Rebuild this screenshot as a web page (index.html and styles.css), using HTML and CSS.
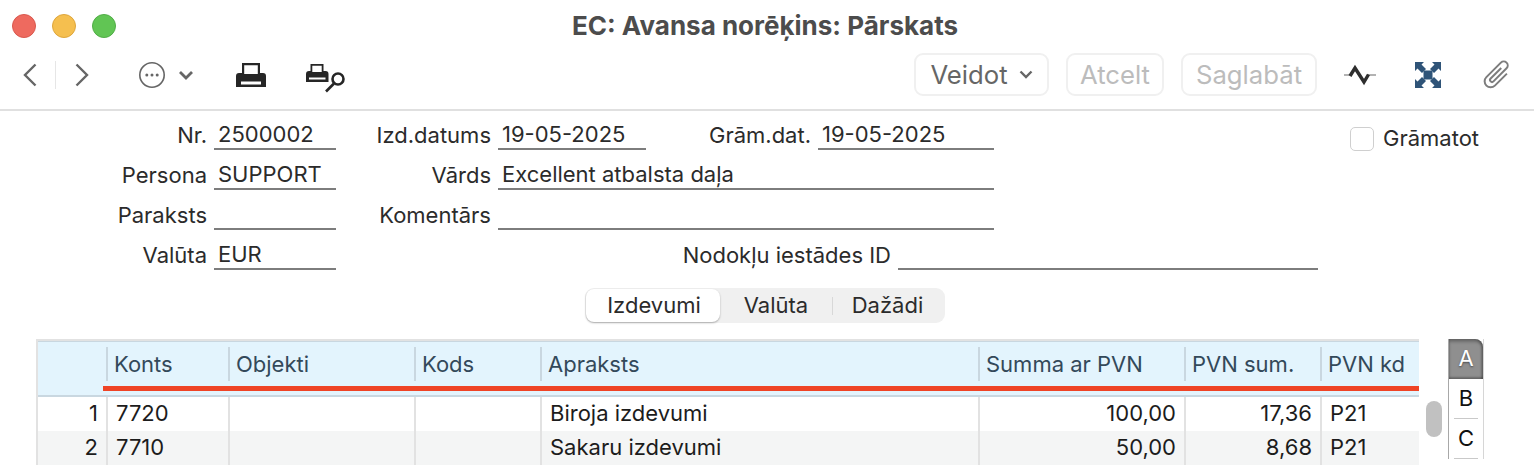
FILE: index.html
```html
<!DOCTYPE html>
<html lang="lv">
<head>
    <meta charset="UTF-8">
    <title>EC: Avansa norēķins: Pārskats</title>
    <link rel="stylesheet" href="styles.css">
</head>
<body>
    <div class="window">
        <div class="titlebar">
            <div class="lights">
                <span class="light light-red"></span>
                <span class="light light-yellow"></span>
                <span class="light light-green"></span>
            </div>
            <h1>EC: Avansa norēķins: Pārskats</h1>
        </div>

        <div class="toolbar">
            <svg class="icon icon-back" width="14" height="24" viewBox="0 0 14 24"><path d="M12.500 1.500 2 12l10.500 10.500"/></svg>
            <span class="nav-sep"></span>
            <svg class="icon icon-forward" width="14" height="24" viewBox="0 0 14 24"><path d="M1.500 1.500 12 12 1.500 22.500"/></svg>
            <svg class="icon icon-more" width="28" height="28" viewBox="0 0 28 28">
                <circle cx="14" cy="14" r="12.200"/>
                <circle class="dot" cx="8.800" cy="14" r="1.500"/>
                <circle class="dot" cx="14" cy="14" r="1.500"/>
                <circle class="dot" cx="19.200" cy="14" r="1.500"/>
            </svg>
            <svg class="icon icon-caret" width="16" height="10" viewBox="0 0 16 10"><path d="M2 2l6 6 6-6"/></svg>
            <svg class="icon-solid icon-print" width="32" height="26" viewBox="0 0 32 26">
                <path d="M7 1h18v10h3a3 3 0 0 1 3 3v11H1V14a3 3 0 0 1 3-3h3zm2.200 2.200V12h13.600V3.200zM6 19.500V22.500h20V19.500z" fill-rule="evenodd"/>
            </svg>
            <svg class="icon-solid icon-preview" width="42" height="30" viewBox="0 0 42 30">
                <path d="M5.500 1h13v7h2a3 3 0 0 1 3 3v8H1v-8a3 3 0 0 1 3-3h1.500zm1.800 1.800V9h9.400V2.800zM4 14.500V16.500h16.500v-2z" fill-rule="evenodd"/>
                <circle class="lens" cx="33" cy="16" r="5.500"/>
                <path class="lens" d="M29 20.500 21 28.500"/>
            </svg>
            <div class="spacer"></div>
            <button class="btn btn-veidot">Veidot
                <svg class="icon" width="14" height="9" viewBox="0 0 14 9"><path d="M1.500 1.500 7 7l5.500-5.500"/></svg>
            </button>
            <button class="btn btn-off btn-atcelt">Atcelt</button>
            <button class="btn btn-off btn-saglabat">Saglabāt</button>
            <svg class="icon-wave" width="32" height="26" viewBox="0 0 32 26">
                <path class="wave-tail" d="M0 13h7M24 13h8"/>
                <path class="wave-line" d="M6 14l5-8 9 14 4.500-7.500"/>
            </svg>
            <svg class="icon-solid icon-expand" width="26" height="26" viewBox="0 0 26 26">
                <rect x="8.500" y="8.500" width="9" height="9"/>
                <path d="M0 0h9L6.500 2.500 11 7 7 11 2.500 6.500 0 9zM26 0v9l-2.500-2.500L19 11l-4-4 4.500-4.500L17 0zM26 26h-9l2.500-2.500L15 19l4-4 4.500 4.500L26 17zM0 26v-9l2.500 2.500L7 15l4 4-4.500 4.500L9 26z"/>
            </svg>
            <svg class="icon icon-clip" width="32" height="32" viewBox="0 0 32 32">
                <path transform="rotate(45 16 16)" d="M22 8v17a6 6 0 0 1-12 0V4.500a4 4 0 0 1 8 0V23a2 2 0 0 1-4 0V8"/>
            </svg>
        </div>

        <div class="form">
            <label class="lbl col-a">Nr.</label>
            <div class="field col-b">2500002</div>
            <label class="lbl col-c">Izd.datums</label>
            <div class="field col-d">19-05-2025</div>
            <label class="lbl col-e">Grām.dat.</label>
            <div class="field col-f">19-05-2025</div>
            <div class="check">
                <span class="checkbox"></span>
                <span>Grāmatot</span>
            </div>

            <label class="lbl col-a">Persona</label>
            <div class="field col-b">SUPPORT</div>
            <label class="lbl col-c">Vārds</label>
            <div class="field col-wide">Excellent atbalsta daļa</div>

            <label class="lbl col-a">Paraksts</label>
            <div class="field col-b"></div>
            <label class="lbl col-c">Komentārs</label>
            <div class="field col-wide"></div>

            <label class="lbl col-a">Valūta</label>
            <div class="field col-b">EUR</div>
            <label class="lbl col-tax">Nodokļu iestādes ID</label>
            <div class="field col-taxid"></div>
        </div>

        <div class="tabs-wrap">
            <div class="tabs">
                <span class="tab tab-active">Izdevumi</span>
                <span class="tab tab-mid">Valūta</span>
                <span class="tab tab-last">Dažādi</span>
            </div>
        </div>

        <div class="matrix">
            <div class="grid-box">
                <div class="row head">
                    <div class="cell"></div>
                    <div class="cell">Konts</div>
                    <div class="cell">Objekti</div>
                    <div class="cell">Kods</div>
                    <div class="cell">Apraksts</div>
                    <div class="cell">Summa ar PVN</div>
                    <div class="cell">PVN sum.</div>
                    <div class="cell">PVN kd</div>
                </div>
                <div class="red-line"></div>
                <div class="row">
                    <div class="cell num">1</div>
                    <div class="cell">7720</div>
                    <div class="cell"></div>
                    <div class="cell"></div>
                    <div class="cell">Biroja izdevumi</div>
                    <div class="cell num">100,00</div>
                    <div class="cell num">17,36</div>
                    <div class="cell">P21</div>
                </div>
                <div class="row row-alt">
                    <div class="cell num">2</div>
                    <div class="cell">7710</div>
                    <div class="cell"></div>
                    <div class="cell"></div>
                    <div class="cell">Sakaru izdevumi</div>
                    <div class="cell num">50,00</div>
                    <div class="cell num">8,68</div>
                    <div class="cell">P21</div>
                </div>
            </div>
            <div class="scroll"><div class="thumb"></div></div>
            <div class="letters">
                <div class="letter letter-on">A</div>
                <div class="letter">B</div>
                <div class="letter">C</div>
            </div>
        </div>
    </div>
</body>
</html>
```

FILE: styles.css
```css
* {
    margin: 0;
    padding: 0;
    box-sizing: border-box;
}

html, body {
    height: 465px;
    overflow: hidden;
    background: #fff;
}

body {
    font-family: Inter, 'Liberation Sans', sans-serif;
    font-size: 22px;
    color: #2b2b2b;
}

.window {
    width: 1534px;
    height: 465px;
    overflow: hidden;
}

.titlebar {
    height: 50px;
    display: flex;
    align-items: center;
    position: relative;
}

.lights {
    display: flex;
    gap: 16px;
    padding: 2px 0 0 12px;
}

.light {
    width: 24px;
    height: 24px;
    border-radius: 50%;
}

.light-red { background: #ee6a5f; border: 1px solid #d9584e; }
.light-yellow { background: #f5bf4f; border: 1px solid #dea63c; }
.light-green { background: #61c554; border: 1px solid #51ad47; }

.titlebar h1 {
    position: absolute;
    left: 0;
    right: 4px;
    top: 10px;
    text-align: center;
    font-size: 26px;
    font-weight: 700;
    color: #4c4c4c;
    line-height: 32px;
}

.toolbar {
    height: 61px;
    display: flex;
    align-items: center;
    padding: 0 21px 10px 23px;
    border-bottom: 2px solid #e0e0e0;
}

.icon {
    fill: none;
    stroke: #666;
    stroke-width: 2.4;
    flex: none;
}

.icon-solid {
    fill: #262626;
    flex: none;
}

.dot {
    fill: #666;
    stroke: none;
}

.nav-sep {
    width: 1px;
    height: 28px;
    background: #e6e6e6;
    margin: 0 19px 0 18px;
}

.icon-more {
    margin-left: 49px;
    stroke-width: 1.6;
}

.icon-caret { margin-left: 12px; stroke-width: 2.8; }
.icon-print { margin-left: 41px; }
.icon-preview { margin-left: 38px; margin-top: 6px; }

.lens {
    fill: none;
    stroke: #262626;
    stroke-width: 2.6;
}

.spacer {
    flex: 1;
}

.btn {
    height: 43px;
    font: inherit;
    font-size: 25.7px;
    color: #666;
    background: #fff;
    border: 2px solid #f0f0f0;
    border-radius: 9px;
    display: flex;
    align-items: center;
    justify-content: center;
    gap: 11px;
}

.btn .icon { stroke-width: 2.4; }

.btn-veidot { width: 135px; }
.btn-off { color: #bcbcbc; }
.btn-atcelt { width: 98px; margin-left: 17px; }
.btn-saglabat { width: 136px; margin-left: 17px; }

.icon-wave { margin-left: 27px; flex: none; fill: none; }
.wave-tail { stroke: #9a9a9a; stroke-width: 1.500; }
.wave-line { stroke: #2e2e2e; stroke-width: 3.400; }
.icon-expand { margin-left: 39px; fill: #2f5478; }
.icon-clip { margin-left: 40px; stroke: #7d7d7d; stroke-width: 2; }

.form {
    display: grid;
    grid-template-columns: 214px 122px 162px 148px 172px 80px 96px 324px 32px 154px;
    grid-auto-rows: 40px;
    margin-top: -1px;
}

.lbl {
    display: flex;
    align-items: flex-end;
    justify-content: flex-end;
    padding: 0 7px 1px 0;
    line-height: 28px;
    white-space: nowrap;
}

.field {
    display: flex;
    align-items: flex-end;
    padding: 0 0 0 4px;
    line-height: 28px;
    border-bottom: 2px solid #7d7d7d;
}

.col-a { grid-column: 1; }
.col-b { grid-column: 2; }
.col-c { grid-column: 3; }
.col-d { grid-column: 4; }
.col-e { grid-column: 5; }
.col-f { grid-column: 6 / 8; }
.col-wide { grid-column: 4 / 8; }
.col-tax { grid-column: 5 / 7; }
.col-taxid { grid-column: 7 / 9; }

.check {
    grid-column: 10;
    display: flex;
    align-items: flex-end;
    gap: 9px;
    line-height: 28px;
    white-space: nowrap;
    transform: translateY(2px);
}

.checkbox {
    width: 24px;
    height: 24px;
    border: 1px solid #cfcfcf;
    border-radius: 5px;
    background: #fff;
    margin-bottom: 1px;
}

.tabs-wrap {
    display: flex;
    justify-content: center;
    padding: 18px 4px 0 0;
}

.tabs {
    width: 360px;
    height: 35px;
    display: flex;
    align-items: center;
    padding: 1px;
    background: #f0f0f0;
    border-radius: 9px;
}

.tab {
    height: 33px;
    line-height: 33px;
    text-align: center;
}

.tab-active {
    width: 134px;
    padding-left: 2px;
    background: #fff;
    border-radius: 8px;
    box-shadow: 0 1px 2px rgba(0, 0, 0, 0.3);
}

.tab-mid {
    width: 113px;
    padding-right: 1px;
    position: relative;
}

.tab-mid::after {
    content: '';
    position: absolute;
    right: 0;
    top: 8px;
    height: 18px;
    border-right: 1px solid #d8d8d8;
}

.tab-last {
    flex: 1;
    padding-right: 2px;
}

.matrix {
    display: flex;
    align-items: flex-start;
    margin: 16px 0 0 36px;
}

.grid-box {
    width: 1383px;
    position: relative;
    border-top: 2px solid #e2e2e2;
    border-left: 2px solid #e2e2e2;
    flex: none;
}

.row {
    display: grid;
    grid-template-columns: 70px 122px 186px 126px 438px 206px 136px 93px;
    height: 34px;
    line-height: 33px;
    color: #1c1c1c;
}

.row-alt {
    background: #f4f5f5;
    height: 36px;
}

.cell {
    padding: 0 8px;
    border-right: 2px solid #e2e2e2;
    white-space: nowrap;
}

.cell:last-child {
    border-right: none;
}

.num {
    text-align: right;
}

.head {
    height: 56px;
    background: #e3f4fd;
    color: #33495a;
    border-top: 1px solid #c9d7e0;
    border-bottom: 2px solid #c9d7e0;
    align-items: start;
}

.head .cell {
    height: 34px;
    margin-top: 5px;
    line-height: 34px;
    padding-left: 6px;
    border-right-color: #c9d7e0;
}

.red-line {
    position: absolute;
    left: 65px;
    right: 0;
    top: 45px;
    height: 5px;
    background: #ef4426;
}

.scroll {
    width: 29px;
    height: 127px;
    padding: 62px 0 0 7px;
    flex: none;
}

.thumb {
    width: 16px;
    height: 36px;
    background: #c1c1c1;
    border-radius: 8px;
}

.letters {
    width: 36px;
    flex: none;
    border-right: 1px solid #d6d6d6;
    border-left: 1px solid #a8a8a8;
}

.letter {
    width: 100%;
    height: 40px;
    line-height: 39px;
    text-align: center;
    color: #111;
    position: relative;
}

.letter::after {
    content: '';
    position: absolute;
    left: 5px;
    right: 5px;
    bottom: 0;
    border-bottom: 1px solid #c9c9c9;
}

.letter-on {
    background: #8f8f8f;
    color: #fff;
    border-radius: 0 8px 0 0;
    box-shadow: inset 0 3px 3px rgba(0, 0, 0, 0.25), inset -2px 0 2px rgba(0, 0, 0, 0.2), inset 0 -2px 2px rgba(0, 0, 0, 0.25);
    text-shadow: 0 1px 2px rgba(0, 0, 0, 0.5);
}

.letter-on::after {
    display: none;
}
```
